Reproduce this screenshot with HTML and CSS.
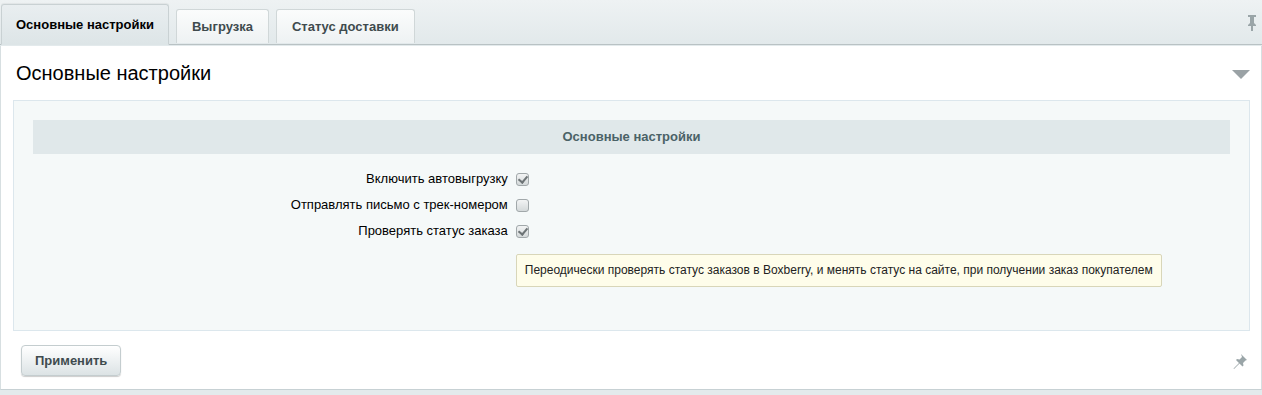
FILE: index.html
```html
<!DOCTYPE html>
<html lang="ru">
<head>
    <meta charset="UTF-8">
    <title>Настройки модуля</title>
    <link rel="stylesheet" href="styles.css">
</head>
<body>
    <div class="tabs">
        <div class="tab tab-active">Основные настройки</div>
        <div class="tab">Выгрузка</div>
        <div class="tab">Статус доставки</div>
        <span class="tabs-pin">
            <svg width="10" height="16" viewBox="0 0 10 16"><path d="M1 0h8v2H7v6l2 2v1H6v5H4v-5H1v-1l2-2V2H1z" fill="#9aa5a8"/></svg>
        </span>
    </div>

    <div class="panel">
        <div class="panel-head">
            <h2 class="panel-title">Основные настройки</h2>
            <span class="panel-toggle"></span>
        </div>

        <div class="edit-box">
            <div class="section-head">Основные настройки</div>
            <table class="fields">
                <tr>
                    <td class="field-label">Включить автовыгрузку</td>
                    <td class="field-value"><span class="check checked"></span></td>
                </tr>
                <tr>
                    <td class="field-label">Отправлять письмо с трек-номером</td>
                    <td class="field-value"><span class="check"></span></td>
                </tr>
                <tr>
                    <td class="field-label">Проверять статус заказа</td>
                    <td class="field-value"><span class="check checked"></span></td>
                </tr>
                <tr>
                    <td></td>
                    <td class="field-value">
                        <div class="note">Переодически проверять статус заказов в Boxberry, и менять статус на сайте, при получении заказ покупателем</div>
                    </td>
                </tr>
            </table>
        </div>

        <div class="panel-foot">
            <button class="btn">Применить</button>
            <span class="foot-pin">
                <svg width="16" height="16" viewBox="0 0 16 16"><path d="M9 1l6 6-1.5 0.5-2.5 2.5 0.5 2.5-1 1-3-3-5.5 5.5-0.5-0.5 5.5-5.5-3-3 1-1 2.5 0.5 2.5-2.5z" fill="#9aa5a8"/></svg>
            </span>
        </div>
    </div>
    <div class="bottom"></div>
</body>
</html>
```

FILE: styles.css
```css
body {
    margin: 0;
    background-color: #e3eaec;
    font-family: 'Liberation Sans', Arial, sans-serif;
    font-size: 13px;
    color: #000;
}

.tabs {
    display: flex;
    align-items: flex-end;
    height: 45px;
    padding-left: 1px;
    background: linear-gradient(#eef2f3, #e2e9eb);
    border-bottom: 1px solid #b9c2c4;
    box-sizing: border-box;
    position: relative;
}

.tab {
    height: 34px;
    margin-right: 7px;
    margin-bottom: 1px;
    padding: 0 15px;
    display: flex;
    align-items: center;
    font-weight: bold;
    font-size: 13px;
    color: #3f4b4e;
    background: linear-gradient(#fbfcfc, #eef2f3);
    border: 1px solid #d0d7d8;
    border-bottom: none;
    border-radius: 3px 3px 0 0;
    box-sizing: border-box;
}

.tab-active {
    height: 41px;
    margin-bottom: -1px;
    padding: 0 14px;
    color: #000;
    background: linear-gradient(#e9eef0, #dde5e7);
    border-color: #c9d1d3;
    border-bottom: 1px solid #dde5e7;
    box-shadow: 0 -1px 1px rgba(0, 0, 0, 0.05);
}

.tabs-pin {
    position: absolute;
    right: 5px;
    top: 15px;
}

.panel {
    background-color: #fff;
    border-left: 1px solid #d7dfe1;
    border-right: 1px solid #d7dfe1;
    border-bottom: 1px solid #c7d1d4;
    margin-top: 1px;
}

.panel-head {
    display: flex;
    justify-content: space-between;
    align-items: center;
    height: 54px;
    padding: 0 11px 0 15px;
}

.panel-title {
    margin: 0;
    font-weight: normal;
    font-size: 20px;
    color: #000;
}

.panel-toggle {
    width: 0;
    height: 0;
    border-left: 9px solid transparent;
    border-right: 9px solid transparent;
    border-top: 9px solid #9aa2a5;
    margin-top: 2px;
}

.edit-box {
    margin: 0 11px 0 12px;
    padding: 19px 19px 43px 19px;
    background-color: #f5f9f9;
    border: 1px solid #dce7ed;
}

.section-head {
    height: 34px;
    line-height: 34px;
    text-align: center;
    font-weight: bold;
    font-size: 13px;
    color: #4b6267;
    background-color: #e0e8ea;
    margin-bottom: 11px;
}

.fields {
    width: 100%;
    border-collapse: collapse;
}

.field-label {
    width: 40%;
    text-align: right;
    padding: 0 4px 0 0;
    height: 26px;
    color: #000;
}

.field-value {
    padding: 0 0 0 4px;
    height: 26px;
}

.check {
    display: inline-block;
    vertical-align: middle;
    width: 13px;
    height: 13px;
    border: 1px solid #a1a8aa;
    border-radius: 3px;
    background: linear-gradient(#f2f4f4, #d4d9da);
    box-sizing: border-box;
    position: relative;
}

.check.checked::after {
    content: "";
    position: absolute;
    left: 3px;
    top: 0;
    width: 4px;
    height: 7px;
    border-right: 2px solid #6d7476;
    border-bottom: 2px solid #6d7476;
    transform: rotate(40deg);
}

.note {
    display: inline-block;
    margin-top: 11px;
    padding: 8px 8px 9px 8px;
    background-color: #fefdea;
    border: 1px solid #d8d6b9;
    border-radius: 2px;
    color: #222;
    font-size: 12px;
}

.panel-foot {
    display: flex;
    justify-content: space-between;
    align-items: flex-start;
    height: 58px;
    padding: 14px 13px 0 20px;
    box-sizing: border-box;
}

.btn {
    height: 31px;
    padding: 0 13px;
    font-family: 'Liberation Sans', Arial, sans-serif;
    font-size: 13px;
    font-weight: bold;
    color: #3f4b4e;
    background: linear-gradient(#fff, #dce3e5);
    border: 1px solid #c4cdcf;
    border-radius: 4px;
    box-shadow: 0 1px 1px rgba(0, 0, 0, 0.2);
}

.foot-pin {
    margin-top: 8px;
}

.bottom {
    height: 6px;
}
```
